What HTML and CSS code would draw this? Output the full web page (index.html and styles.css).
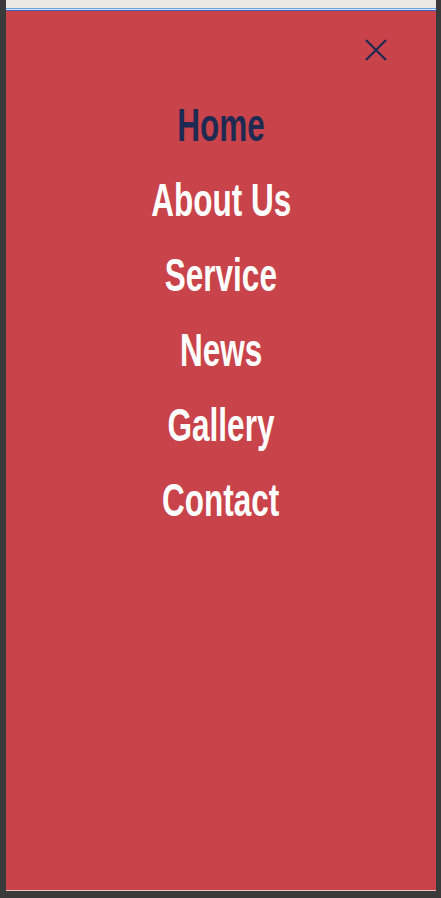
FILE: index.html
```html
<!DOCTYPE html>
<html lang="en">
<head>
<meta charset="utf-8">
<title>Menu</title>
<link rel="stylesheet" href="styles.css">
</head>
<body>
<div class="frame">
  <div class="topbar"></div>
  <div class="rule"></div>
  <div class="menu">
    <div class="menu-head">
      <button class="close" aria-label="Close menu">
        <svg width="22" height="22" viewBox="0 0 22 22"><path d="M1 1 L21 21 M21 1 L1 21" stroke="#1e2a52" stroke-width="2.2" fill="none"/></svg>
      </button>
    </div>
    <nav class="nav">
      <a class="nav-link active" href="#">Home</a>
      <a class="nav-link" href="#">About Us</a>
      <a class="nav-link" href="#">Service</a>
      <a class="nav-link" href="#">News</a>
      <a class="nav-link" href="#">Gallery</a>
      <a class="nav-link" href="#">Contact</a>
    </nav>
  </div>
</div>
</body>
</html>
```
FILE: styles.css
```css
html, body {
  margin: 0;
  padding: 0;
  height: 898px;
  overflow: hidden;
}
body {
  background: #3a3a3a;
}
.frame {
  padding: 0 5px 7px 6px;
  display: flex;
  flex-direction: column;
}
.topbar {
  height: 8px;
  background: #ebe8e4;
}
.rule {
  height: 1px;
  background: #dfe9f7;
  border-top: 1px solid #6fa0e6;
  border-bottom: 1px solid #2e62c8;
}
.menu {
  height: 879px;
  background: #c9434a;
  border-bottom: 1px solid #f2c4c4;
  display: flex;
  flex-direction: column;
}
.menu-head {
  display: flex;
  justify-content: flex-end;
  padding: 28px 49px 0 0;
}
.close {
  background: none;
  border: 0;
  padding: 0;
  width: 22px;
  height: 22px;
  display: block;
  cursor: pointer;
}
.close svg {
  display: block;
}
.nav {
  display: flex;
  flex-direction: column;
  align-items: center;
  margin-top: 27px;
}
.nav-link {
  display: inline-block;
  font-family: "Liberation Sans", Arial, sans-serif;
  font-weight: 700;
  font-size: 46px;
  line-height: 75px;
  color: #ffffff;
  text-decoration: none;
  transform: scaleX(0.685);
}
.nav-link.active {
  color: #1e2a52;
}
```
